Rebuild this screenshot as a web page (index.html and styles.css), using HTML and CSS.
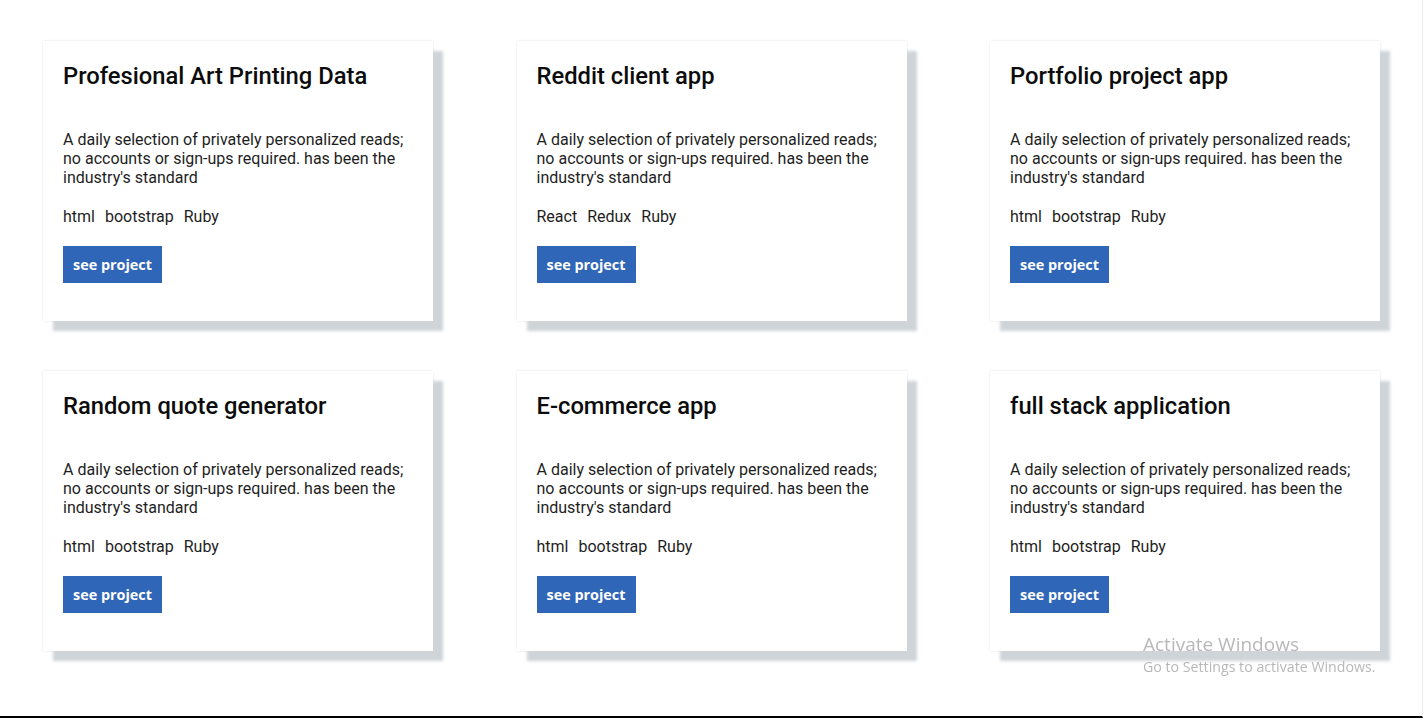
FILE: index.html
```html
<!DOCTYPE html>
<html lang="en">
<head>
<meta charset="utf-8">
<title>Projects</title>
<link rel="stylesheet" href="styles.css">
</head>
<body>
<main class="page">
  <section class="grid">
    <article class="card">
      <h2 class="card-title">Profesional Art Printing Data</h2>
      <p class="card-text">A daily selection of privately personalized reads; no accounts or sign-ups required. has been the industry's standard</p>
      <ul class="tags"><li>html</li><li>bootstrap</li><li>Ruby</li></ul>
      <a class="btn" href="#">see project</a>
    </article>
    <article class="card">
      <h2 class="card-title">Reddit client app</h2>
      <p class="card-text">A daily selection of privately personalized reads; no accounts or sign-ups required. has been the industry's standard</p>
      <ul class="tags"><li>React</li><li>Redux</li><li>Ruby</li></ul>
      <a class="btn" href="#">see project</a>
    </article>
    <article class="card">
      <h2 class="card-title">Portfolio project app</h2>
      <p class="card-text">A daily selection of privately personalized reads; no accounts or sign-ups required. has been the industry's standard</p>
      <ul class="tags"><li>html</li><li>bootstrap</li><li>Ruby</li></ul>
      <a class="btn" href="#">see project</a>
    </article>
    <article class="card">
      <h2 class="card-title">Random quote generator</h2>
      <p class="card-text">A daily selection of privately personalized reads; no accounts or sign-ups required. has been the industry's standard</p>
      <ul class="tags"><li>html</li><li>bootstrap</li><li>Ruby</li></ul>
      <a class="btn" href="#">see project</a>
    </article>
    <article class="card">
      <h2 class="card-title">E-commerce app</h2>
      <p class="card-text">A daily selection of privately personalized reads; no accounts or sign-ups required. has been the industry's standard</p>
      <ul class="tags"><li>html</li><li>bootstrap</li><li>Ruby</li></ul>
      <a class="btn" href="#">see project</a>
    </article>
    <article class="card">
      <h2 class="card-title">full stack application</h2>
      <p class="card-text">A daily selection of privately personalized reads; no accounts or sign-ups required. has been the industry's standard</p>
      <ul class="tags"><li>html</li><li>bootstrap</li><li>Ruby</li></ul>
      <a class="btn" href="#">see project</a>
    </article>
  </section>
</main>
<div class="watermark">
  <div class="wm-title">Activate Windows</div>
  <div class="wm-sub">Go to Settings to activate Windows.</div>
</div>
</body>
</html>
```

FILE: styles.css
```css
* { box-sizing: border-box; }

html, body {
  margin: 0;
  padding: 0;
  height: 100%;
  background: #ffffff;
  overflow: hidden;
}

body {
  font-family: Roboto, "Liberation Sans", sans-serif;
  color: #111;
}

.page {
  width: 1423px;
  height: 718px;
  border-right: 1px solid #ececec;
  border-bottom: 2px solid #000;
  padding: 41px 42px 0 43px;
}

.grid {
  display: grid;
  grid-template-columns: repeat(3, 390px);
  justify-content: space-between;
  row-gap: 50px;
  width: 1337px;
}

.card {
  height: 280px;
  background: #fff;
  padding: 21px 20px 0 20px;
  box-shadow: 10px 10px 3px #cfd4d8, 0 0 2px rgba(0, 0, 0, 0.12);
  display: flex;
  flex-direction: column;
  align-items: flex-start;
}

.card-title {
  margin: 0;
  font-size: 23.75px;
  font-weight: 500;
  line-height: 28px;
  color: #0c0c0c;
}

.card-text {
  margin: 40px 0 0 0;
  font-size: 16px;
  line-height: 19px;
  color: #1e1e1e;
}

.tags {
  list-style: none;
  margin: 20px 0 0 0;
  padding: 0;
  display: flex;
  gap: 10px;
  font-size: 16px;
  line-height: 19px;
  color: #1e1e1e;
}

.btn {
  margin-top: 20px;
  display: inline-flex;
  align-items: center;
  justify-content: center;
  width: 99px;
  height: 37px;
  background: #2f66b8;
  color: #fff;
  text-decoration: none;
  font-family: "Open Sans", "Liberation Sans", sans-serif;
  font-weight: 700;
  font-size: 14.4px;
}

.watermark {
  position: fixed;
  left: 1143px;
  top: 632px;
  font-family: "Open Sans", "Liberation Sans", sans-serif;
  color: rgba(160, 160, 160, 0.75);
  pointer-events: none;
}

.wm-title {
  font-size: 19px;
  line-height: 24px;
  font-weight: 400;
}

.wm-sub {
  font-size: 14.2px;
  line-height: 22px;
}
```
